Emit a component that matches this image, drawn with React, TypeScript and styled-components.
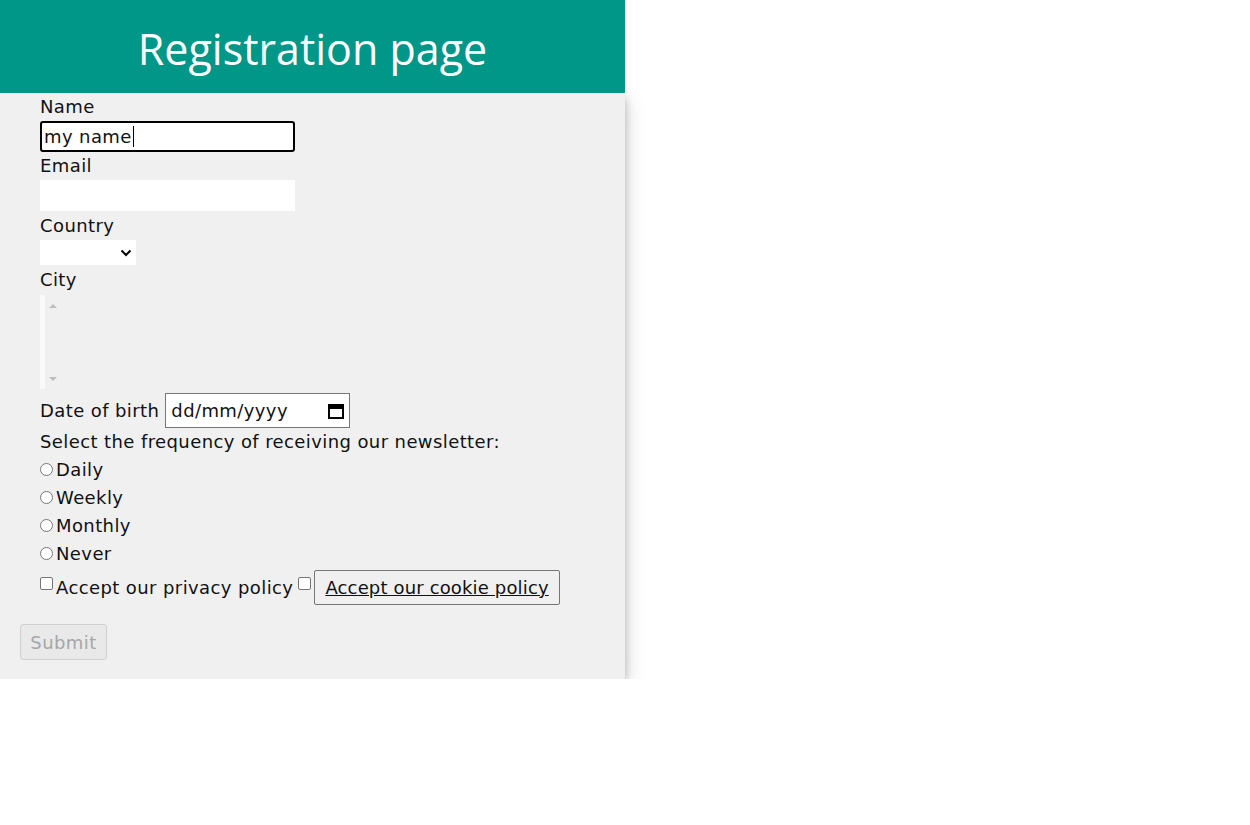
import React from "react";
import styled, { createGlobalStyle } from "styled-components";

const Global = createGlobalStyle`
  html, body { margin: 0; padding: 0; background: #ffffff; }
  body { font-family: "DejaVu Sans", "Liberation Sans", sans-serif; color: #111; }
`;

const Page = styled.div`
  width: 625px;
`;

const Header = styled.h1`
  margin: 0;
  height: 93px;
  background: #009688;
  color: #ffffff;
  font-family: "Open Sans", "Noto Sans", sans-serif;
  font-weight: 400;
  font-size: 43px;
  line-height: 98px;
  text-align: center;
  position: relative;
  z-index: 1;
`;

const Card = styled.form`
  background: #f0f0f0;
  box-shadow: 0 4px 8px 0 rgba(0, 0, 0, 0.2), 0 6px 20px 0 rgba(0, 0, 0, 0.19);
  padding: 0 0 19px 0;
  font-size: 18px;
  letter-spacing: 0.4px;
`;

const Fields = styled.div`
  padding-left: 40px;
  display: flex;
  flex-direction: column;
  align-items: flex-start;
`;

const Label = styled.label<{ $h?: number }>`
  display: block;
  height: ${(p) => p.$h ?? 28}px;
  line-height: ${(p) => p.$h ?? 28}px;
`;

const TextBox = styled.div<{ $focused?: boolean }>`
  box-sizing: border-box;
  width: 255px;
  height: 31px;
  background: #ffffff;
  border: ${(p) => (p.$focused ? "2px solid #000" : "none")};
  border-radius: ${(p) => (p.$focused ? "3px" : "0")};
  padding-left: 2px;
  display: flex;
  align-items: center;
  font-size: 18px;
`;

const Caret = styled.span`
  display: inline-block;
  width: 1px;
  height: 21px;
  background: #000;
  margin-left: 1px;
`;

const SelectBox = styled.div`
  width: 96px;
  height: 25px;
  background: #fff;
  display: flex;
  align-items: center;
  justify-content: flex-end;
  padding-right: 4px;
  box-sizing: border-box;
`;

const ListBox = styled.div`
  height: 94px;
  display: flex;
`;

const ListStrip = styled.div`
  width: 5px;
  background: #fafafa;
`;

const ScrollBar = styled.div`
  width: 16px;
  display: flex;
  flex-direction: column;
  justify-content: space-between;
  align-items: center;
  padding: 9px 0 8px;
`;

const Arrow = styled.div<{ $up?: boolean }>`
  width: 0;
  height: 0;
  border-left: 4.5px solid transparent;
  border-right: 4.5px solid transparent;
  ${(p) =>
    p.$up
      ? "border-bottom: 4px solid #bdbdbd;"
      : "border-top: 4px solid #bdbdbd;"}
`;

const DateRow = styled.div`
  display: flex;
  align-items: center;
  height: 35px;
  padding-top: 4px;
  gap: 6px;
`;

const DateBox = styled.div`
  box-sizing: border-box;
  width: 185px;
  height: 35px;
  border: 1px solid #767676;
  background: #fff;
  display: flex;
  align-items: center;
  justify-content: space-between;
  padding: 0 4px 0 5px;
`;

const Line = styled.div`
  height: 28px;
  line-height: 28px;
  display: flex;
  align-items: center;
`;

const Radio = styled.span`
  box-sizing: border-box;
  width: 13px;
  height: 13px;
  border: 1px solid #767676;
  border-radius: 50%;
  background: #fff;
  margin-right: 3px;
  align-self: flex-start;
  margin-top: 7px;
`;

const CheckRow = styled.div`
  height: 38px;
  display: flex;
  align-items: center;
`;

const Check = styled.span`
  box-sizing: border-box;
  width: 13px;
  height: 13px;
  border: 1px solid #767676;
  border-radius: 2px;
  background: #fff;
  margin-right: 3px;
  align-self: flex-start;
  margin-top: 9px;
`;

const CookieButton = styled.span`
  box-sizing: border-box;
  height: 35px;
  line-height: 33px;
  border: 1px solid #767676;
  border-radius: 2px;
  padding: 0 10px;
  letter-spacing: 0.15px;
  text-decoration: underline;
`;

const Gap = styled.span`
  width: 5px;
`;

const Submit = styled.button`
  margin: 18px 0 0 20px;
  box-sizing: border-box;
  width: 87px;
  height: 36px;
  background: #e9e9e9;
  border: 1px solid #d0d0d0;
  border-radius: 3px;
  color: #a6a6a6;
  font-family: "DejaVu Sans", sans-serif;
  font-size: 18px;
  letter-spacing: 0.4px;
  padding: 0;
`;

const Chevron = () => (
  <svg width="12" height="8" viewBox="0 0 12 8">
    <path d="M1.5 1.5 L6 6 L10.5 1.5" fill="none" stroke="#000" strokeWidth="2" />
  </svg>
);

const Calendar = () => (
  <svg width="18" height="18" viewBox="0 0 18 18">
    <rect x="2" y="3" width="14" height="13" fill="none" stroke="#000" strokeWidth="2" />
    <rect x="2" y="3" width="14" height="4" fill="#000" />
  </svg>
);

export default function App() {
  return (
    <Page>
      <Global />
      <Header>Registration page</Header>
      <Card onSubmit={(e) => e.preventDefault()}>
        <Fields>
          <Label>Name</Label>
          <TextBox $focused>
            my name
            <Caret />
          </TextBox>
          <Label>Email</Label>
          <TextBox />
          <Label $h={29}>Country</Label>
          <SelectBox>
            <Chevron />
          </SelectBox>
          <Label $h={30}>City</Label>
          <ListBox>
            <ListStrip />
            <ScrollBar>
              <Arrow $up />
              <Arrow />
            </ScrollBar>
          </ListBox>
          <DateRow>
            <span>Date of birth</span>
            <DateBox>
              <span>dd/mm/yyyy</span>
              <Calendar />
            </DateBox>
          </DateRow>
          <Line>Select the frequency of receiving our newsletter:</Line>
          <Line>
            <Radio />
            Daily
          </Line>
          <Line>
            <Radio />
            Weekly
          </Line>
          <Line>
            <Radio />
            Monthly
          </Line>
          <Line>
            <Radio />
            Never
          </Line>
          <CheckRow>
            <Check />
            Accept our privacy policy
            <Gap />
            <Check />
            <CookieButton>Accept our cookie policy</CookieButton>
          </CheckRow>
        </Fields>
        <Submit type="submit" disabled>
          Submit
        </Submit>
      </Card>
    </Page>
  );
}
